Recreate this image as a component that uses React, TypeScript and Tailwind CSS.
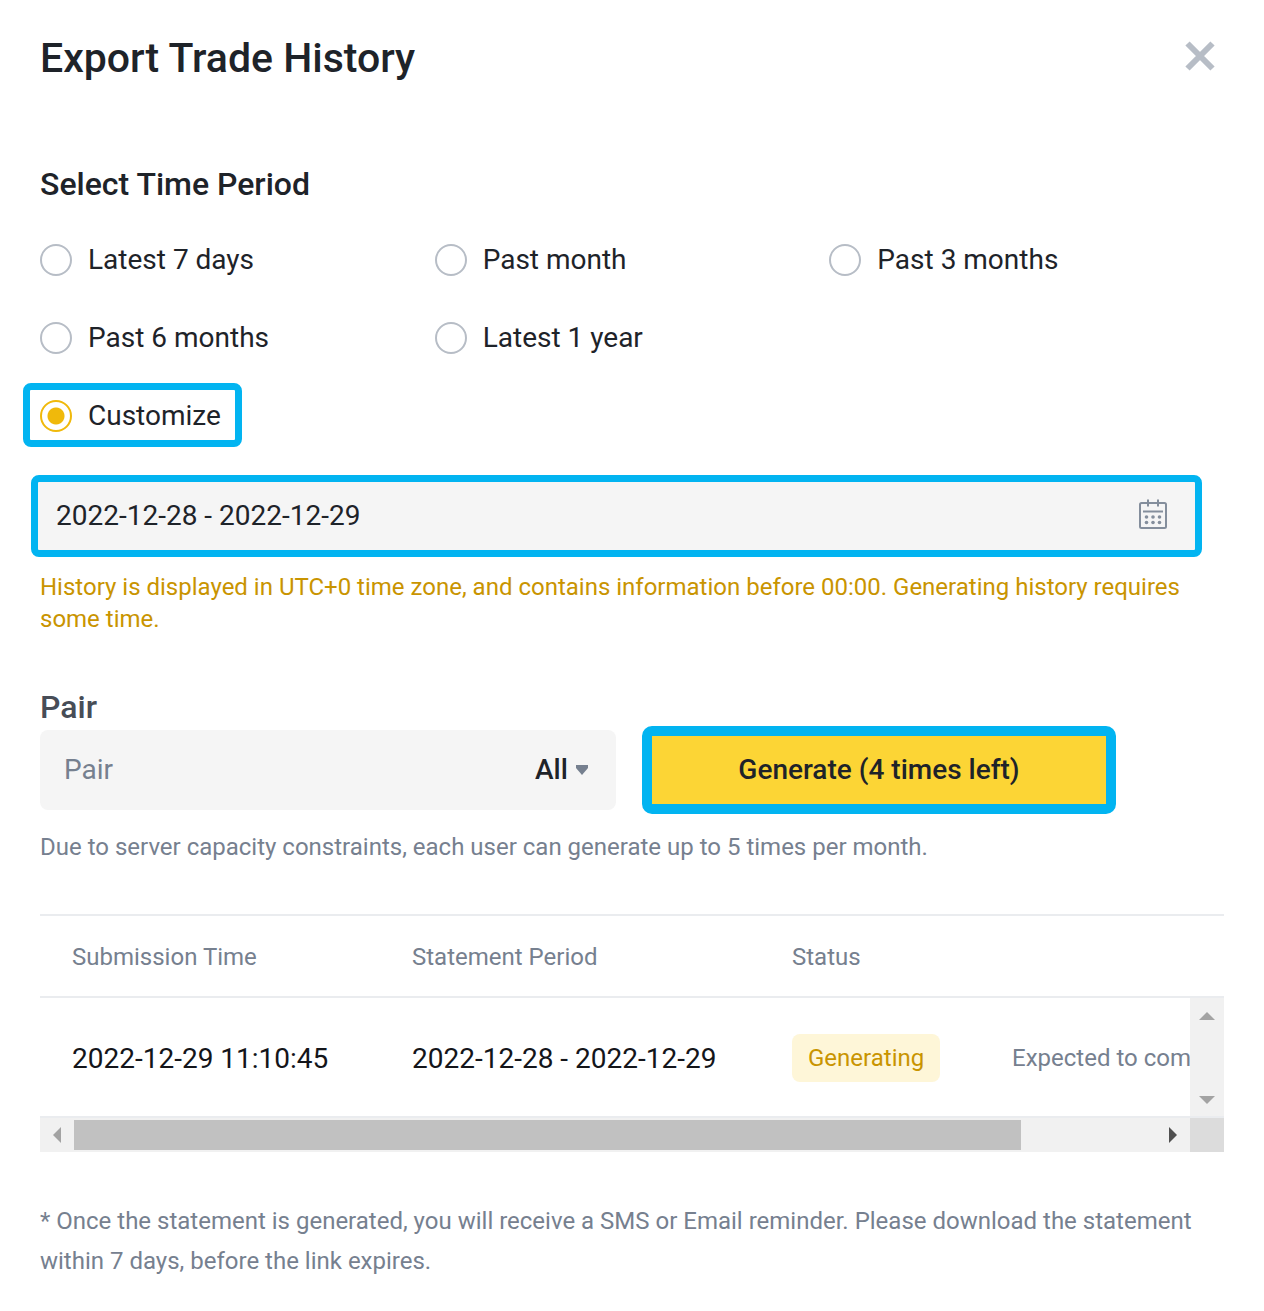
import { useState } from "react"

const periods = [
    { id: "7d", label: "Latest 7 days" },
    { id: "1m", label: "Past month" },
    { id: "3m", label: "Past 3 months" },
    { id: "6m", label: "Past 6 months" },
    { id: "1y", label: "Latest 1 year" },
]

interface PeriodRadioProps {
    id: string
    label: string
    checked: boolean
    onSelect: (id: string) => void
}

function PeriodRadio({ id, label, checked, onSelect }: PeriodRadioProps) {
    return (
        <label className="flex items-center gap-4 text-[28px] leading-8 text-[#1e2329] cursor-pointer">
            <input
                type="radio"
                name="period"
                value={id}
                checked={checked}
                onChange={() => onSelect(id)}
                className="appearance-none size-8 shrink-0 rounded-full border-2 border-[#b7bdc6] checked:border-[#f0b90b] checked:bg-[radial-gradient(circle,#f0b90b_8px,transparent_9px)]"
            />
            {label}
        </label>
    )
}

function CalendarIcon() {
    return (
        <svg width="28" height="30" viewBox="0 0 28 30" className="mb-1" fill="none" stroke="#848e9c" strokeWidth="2" aria-hidden="true">
            <rect x="1" y="4" width="26" height="25" rx="1.5" />
            <path d="M9 0.5v7M19 0.5v7" />
            <path d="M4 12.5h20" />
            <g fill="#848e9c" stroke="none">
                <circle cx="7.5" cy="18" r="1.8" />
                <circle cx="14" cy="18" r="1.8" />
                <circle cx="20.5" cy="18" r="1.8" />
                <circle cx="7.5" cy="23.5" r="1.8" />
                <circle cx="14" cy="23.5" r="1.8" />
                <circle cx="20.5" cy="23.5" r="1.8" />
            </g>
        </svg>
    )
}

function App() {
    const [period, setPeriod] = useState("custom")
    const [range, setRange] = useState("2022-12-28 - 2022-12-29")
    const [pair, setPair] = useState("")

    return (
        <main className="bg-white px-10 pt-7 pb-7 font-['Roboto',sans-serif] text-[#1e2329]">
            <header className="flex items-start justify-between pr-2">
                <h1 className="text-[41px] leading-[60px] font-medium">Export Trade History</h1>
                <button type="button" aria-label="Close" className="mt-3">
                    <svg width="32" height="32" viewBox="0 0 32 32" stroke="#b7bdc6" strokeWidth="6" aria-hidden="true">
                        <path d="M3.5 3.5l25 25M28.5 3.5l-25 25" />
                    </svg>
                </button>
            </header>

            <fieldset className="mt-[76px]">
                <legend className="text-[32px] leading-10 font-medium">Select Time Period</legend>
                <div className="mt-10 grid grid-cols-3 gap-y-[46px]">
                    {periods.map((p) => (
                        <PeriodRadio key={p.id} id={p.id} label={p.label} checked={period === p.id} onSelect={setPeriod} />
                    ))}
                </div>
                <div className="mt-[29px] -ml-[17px] w-fit rounded-lg border-[7px] border-[#02b4f1] pl-2.5 pr-3.5 pt-2.5 pb-2">
                    <PeriodRadio id="custom" label="Customize" checked={period === "custom"} onSelect={setPeriod} />
                </div>
            </fieldset>

            <div className="mt-7 -ml-[9px] mr-[22px] flex h-[82px] items-center rounded-lg border-[7px] border-[#02b4f1] bg-[#f5f5f5] pl-[18px] pr-7">
                <input
                    type="text"
                    aria-label="Date range"
                    value={range}
                    onChange={(e) => setRange(e.target.value)}
                    className="min-w-0 flex-1 bg-transparent text-[28px] leading-10 outline-none"
                />
                <CalendarIcon />
            </div>
            <p className="mt-3.5 text-2xl leading-8 text-[#c99400]">
                History is displayed in UTC+0 time zone, and contains information before 00:00. Generating history requires some time.
            </p>

            <label htmlFor="pair" className="mt-[52px] block text-[32px] leading-10 font-medium text-[#474d57]">Pair</label>
            <div className="mt-[3px] flex items-center gap-[26px]">
                <div className="flex h-20 w-[576px] items-center rounded-lg bg-[#f5f5f5] pl-6 pr-7">
                    <input
                        id="pair"
                        type="text"
                        placeholder="Pair"
                        value={pair}
                        onChange={(e) => setPair(e.target.value)}
                        className="min-w-0 flex-1 bg-transparent text-[28px] leading-10 outline-none placeholder:text-[#76808f]"
                    />
                    <select aria-label="Pair filter" className="appearance-none bg-transparent text-[28px] leading-10 font-medium outline-none">
                        <option>All</option>
                    </select>
                    <svg width="12" height="10" viewBox="0 0 12 10" className="ml-2" fill="#76808f" aria-hidden="true">
                        <path d="M0 0h12v3L6 10 0 3z" />
                    </svg>
                </div>
                <button type="button" className="-my-1 h-[88px] w-[474px] rounded-[10px] border-[10px] border-[#02b4f1] bg-[#fcd535] text-[28px] font-medium">
                    Generate (4 times left)
                </button>
            </div>
            <p className="mt-[21px] text-2xl leading-8 text-[#76808f]">
                Due to server capacity constraints, each user can generate up to 5 times per month.
            </p>

            <section className="mt-[51px]">
                <table className="w-full table-fixed border-collapse border-t-2 border-[#eaecef] text-left text-2xl text-[#76808f]">
                    <colgroup>
                        <col className="w-[340px]" />
                        <col className="w-[380px]" />
                        <col className="w-[220px]" />
                        <col />
                        <col className="w-[34px]" />
                    </colgroup>
                    <thead>
                        <tr className="h-[82px] border-b-2 border-[#eaecef]">
                            <th className="pt-0.5 pl-8 font-normal">Submission Time</th>
                            <th className="pt-0.5 pl-8 font-normal">Statement Period</th>
                            <th className="pt-0.5 pl-8 font-normal">Status</th>
                            <th></th>
                            <th></th>
                        </tr>
                    </thead>
                    <tbody>
                        <tr className="h-[120px] border-b-2 border-[#eaecef]">
                            <td className="pt-1 pl-8 text-[28px] text-[#14151a]">2022-12-29 11:10:45</td>
                            <td className="pt-1 pl-8 text-[28px] text-[#14151a]">2022-12-28 - 2022-12-29</td>
                            <td className="pt-0.5 pl-8">
                                <span className="inline-block rounded-lg bg-[#fef6d8] px-4 leading-[48px] text-[#c99400]">Generating</span>
                            </td>
                            <td className="overflow-hidden pt-0.5 pl-8 whitespace-nowrap">Expected to com</td>
                            <td className="bg-[#f1f1f1] p-0">
                                <div className="flex h-[118px] flex-col items-center justify-between pt-3.5 pb-3">
                                    <svg width="16" height="8" viewBox="0 0 16 8" fill="#a3a3a3" aria-hidden="true">
                                        <path d="M0 8L8 0l8 8z" />
                                    </svg>
                                    <svg width="16" height="8" viewBox="0 0 16 8" fill="#a3a3a3" aria-hidden="true">
                                        <path d="M0 0l8 8 8-8z" />
                                    </svg>
                                </div>
                            </td>
                        </tr>
                    </tbody>
                </table>
                <div className="flex h-[34px] bg-[#f1f1f1]">
                    <div className="flex flex-1 items-center">
                        <div className="flex w-[34px] justify-center">
                            <svg width="8" height="16" viewBox="0 0 8 16" fill="#a3a3a3" aria-hidden="true">
                                <path d="M8 0L0 8l8 8z" />
                            </svg>
                        </div>
                        <div className="flex-1">
                            <div className="h-[30px] w-7/8 bg-[#c1c1c1]" />
                        </div>
                        <div className="flex w-[34px] justify-center">
                            <svg width="8" height="16" viewBox="0 0 8 16" fill="#505050" aria-hidden="true">
                                <path d="M0 0l8 8-8 8z" />
                            </svg>
                        </div>
                    </div>
                    <div className="w-[34px] bg-[#dcdcdc]" />
                </div>
            </section>

            <p className="mt-[49px] text-2xl leading-10 text-[#76808f]">
                * Once the statement is generated, you will receive a SMS or Email reminder. Please download the statement within 7 days, before the link expires.
            </p>
        </main>
    )
}

export default App
